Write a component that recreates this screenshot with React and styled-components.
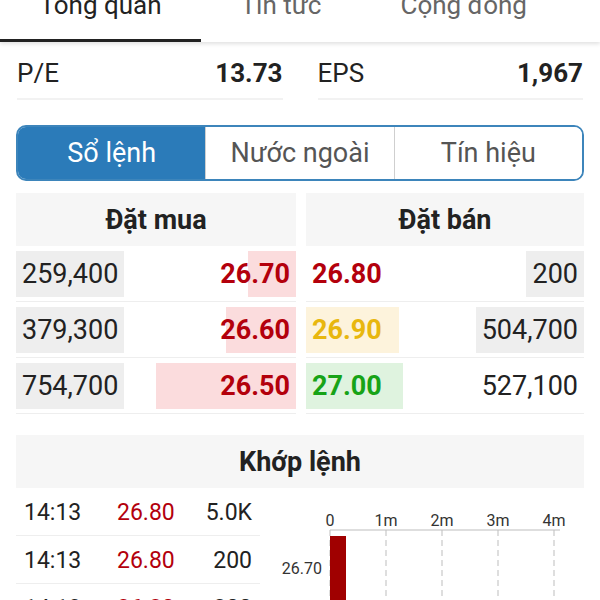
import * as React from "react";
import styled, { createGlobalStyle } from 'styled-components';

const RED = '#b3000c';
const GREEN = '#17a317';
const YELLOW = '#e8b70e';
const BLUE = '#2b7bb9';
const LINE = '#eeeeee';

const GlobalStyle = createGlobalStyle`
  html, body {
    margin: 0;
    padding: 0;
    background: #fff;
    overflow: hidden;
  }
  body {
    font-family: Roboto, "Noto Sans", sans-serif;
    color: #222;
  }
`;

const Page = styled.div`
  width: 600px;
  height: 600px;
  overflow: hidden;
`;

const TabBar = styled.div`
  display: flex;
  height: 54px;
  margin-top: -12px;
  box-shadow: 0 2px 4px rgba(0, 0, 0, 0.12);
  position: relative;
  z-index: 1;
`;

const Tab = styled.div`
  display: flex;
  align-items: flex-end;
  padding: 0 39.5px 19px;
  font-size: 26px;
  color: ${p => p.active ? '#222' : '#666'};
  border-bottom: 3px solid ${p => p.active ? '#222' : 'transparent'};
`;

const StatsRow = styled.div`
  display: grid;
  grid-template-columns: 1fr 1fr;
  column-gap: 35px;
  padding: 5px 17px 0 17px;
`;

const StatCell = styled.div`
  display: flex;
  justify-content: space-between;
  align-items: center;
  height: 51px;
  border-bottom: 2px solid #f2f2f2;
  font-size: 26px;
`;

const StatValue = styled.span`
  font-weight: 700;
`;

const Segmented = styled.div`
  display: flex;
  margin: 25px 16px 0;
  height: 52px;
  border: 2px solid #3d85bb;
  border-radius: 10px;
  overflow: hidden;
`;

const Segment = styled.div`
  flex: 1;
  display: flex;
  align-items: center;
  justify-content: center;
  font-size: 27px;
  color: ${p => p.active ? '#fff' : '#555'};
  background: ${p => p.active ? BLUE : '#fff'};
  & + & {
    border-left: 1px solid #cfcfcf;
  }
`;

const Book = styled.div`
  display: grid;
  grid-template-columns: 280px 278px;
  column-gap: 10px;
  margin: 12px 16px 0;
`;

const SectionHeader = styled.div`
  display: flex;
  align-items: center;
  justify-content: center;
  height: 53px;
  background: #f6f6f6;
  font-size: 27px;
  font-weight: 700;
  color: #222;
`;

const BookRow = styled.div`
  display: flex;
  justify-content: space-between;
  align-items: center;
  height: 54px;
  padding-top: 1px;
  border-bottom: 1px solid ${LINE};
`;

const Qty = styled.div`
  display: flex;
  align-items: center;
  height: 46px;
  padding: 0 6px;
  font-size: 27px;
  background: ${p => p.hl ? '#eeeeee' : 'transparent'};
`;

const PriceCell = styled.div`
  position: relative;
  display: flex;
  align-items: center;
  justify-content: ${p => p.side === 'buy' ? 'flex-end' : 'flex-start'};
  height: 46px;
  padding: 0 6px;
  min-width: 80px;
  font-size: 27px;
  font-weight: 700;
  color: ${p => p.color};
`;

const DepthBar = styled.div`
  position: absolute;
  top: 0;
  bottom: 0;
  ${p => p.side === 'buy' ? 'right: 0;' : 'left: 0;'}
  background: ${p => p.bg};
`;

const PriceText = styled.span`
  position: relative;
`;

const Matched = styled.div`
  margin: 21px 16px 0;
`;

const MatchedBody = styled.div`
  display: flex;
`;

const TradeTable = styled.div`
  width: 244px;
  flex-shrink: 0;
`;

const TradeRow = styled.div`
  display: grid;
  grid-template-columns: 93px 70px 1fr;
  align-items: center;
  height: 46px;
  padding: 1px 8px 0;
  border-bottom: 1px solid ${LINE};
  font-size: 23px;
`;

const TradePrice = styled.span`
  color: ${RED};
`;

const TradeQty = styled.span`
  text-align: right;
`;

const Chart = styled.svg`
  display: block;
  flex-shrink: 0;
`;

const BAR_BG = {
  red: '#fbdcdd',
  yellow: '#fdf3dc',
  green: '#dff3df',
};
const TEXT = { red: RED, yellow: YELLOW, green: GREEN };

const buys = [
  { qty: '259,400', price: '26.70', tone: 'red', bar: 48, hl: true },
  { qty: '379,300', price: '26.60', tone: 'red', bar: 70, hl: true },
  { qty: '754,700', price: '26.50', tone: 'red', bar: 140, hl: true },
];

const sells = [
  { qty: '200', price: '26.80', tone: 'red', bar: 0, hl: true },
  { qty: '504,700', price: '26.90', tone: 'yellow', bar: 93, hl: true },
  { qty: '527,100', price: '27.00', tone: 'green', bar: 97, hl: false },
];

const trades = [
  { time: '14:13', price: '26.80', qty: '5.0K' },
  { time: '14:13', price: '26.80', qty: '200' },
  { time: '14:13', price: '26.80', qty: '200' },
];

function Price({ side, row }) {
  return (
    <PriceCell side={side} color={TEXT[row.tone]}>
      {row.bar > 0 && <DepthBar side={side} bg={BAR_BG[row.tone]} style={{ width: row.bar }} />}
      <PriceText>{row.price}</PriceText>
    </PriceCell>
  );
}

function VolumeChart() {
  const ticks = ['0', '1m', '2m', '3m', '4m'];
  const x0 = 70;
  const step = 56;
  return (
    <Chart width="324" height="120" viewBox="0 0 324 120">
      {ticks.map((t, i) => (
        <g key={t}>
          <text x={x0 + i * step} y="38" textAnchor="middle" fontSize="16" fill="#333"
            fontFamily="Roboto, sans-serif">{t}</text>
          <line x1={x0 + i * step} y1="42" x2={x0 + i * step} y2="120"
            stroke="#bdbdbd" strokeWidth="1" strokeDasharray="6 4" />
        </g>
      ))}
      <line x1={x0} y1="42" x2="300" y2="42" stroke="#bdbdbd" strokeWidth="1" />
      <rect x={x0} y="48" width="16" height="72" fill="#a00000" />
      <text x="62" y="86" textAnchor="end" fontSize="16" fill="#333"
        fontFamily="Roboto, sans-serif">26.70</text>
    </Chart>
  );
}

export default function App() {
  return (
    <Page>
      <GlobalStyle />
      <TabBar>
        <Tab active>Tổng quan</Tab>
        <Tab>Tin tức</Tab>
        <Tab>Cộng đồng</Tab>
      </TabBar>

      <StatsRow>
        <StatCell><span>P/E</span><StatValue>13.73</StatValue></StatCell>
        <StatCell><span>EPS</span><StatValue>1,967</StatValue></StatCell>
      </StatsRow>

      <Segmented>
        <Segment active>Sổ lệnh</Segment>
        <Segment>Nước ngoài</Segment>
        <Segment>Tín hiệu</Segment>
      </Segmented>

      <Book>
        <div>
          <SectionHeader>Đặt mua</SectionHeader>
          {buys.map((r, i) => (
            <BookRow key={i}>
              <Qty hl={r.hl}>{r.qty}</Qty>
              <Price side="buy" row={r} />
            </BookRow>
          ))}
        </div>
        <div>
          <SectionHeader>Đặt bán</SectionHeader>
          {sells.map((r, i) => (
            <BookRow key={i}>
              <Price side="sell" row={r} />
              <Qty hl={r.hl}>{r.qty}</Qty>
            </BookRow>
          ))}
        </div>
      </Book>

      <Matched>
        <SectionHeader>Khớp lệnh</SectionHeader>
        <MatchedBody>
          <TradeTable>
            {trades.map((t, i) => (
              <TradeRow key={i}>
                <span>{t.time}</span>
                <TradePrice>{t.price}</TradePrice>
                <TradeQty>{t.qty}</TradeQty>
              </TradeRow>
            ))}
          </TradeTable>
          <VolumeChart />
        </MatchedBody>
      </Matched>
    </Page>
  );
}
